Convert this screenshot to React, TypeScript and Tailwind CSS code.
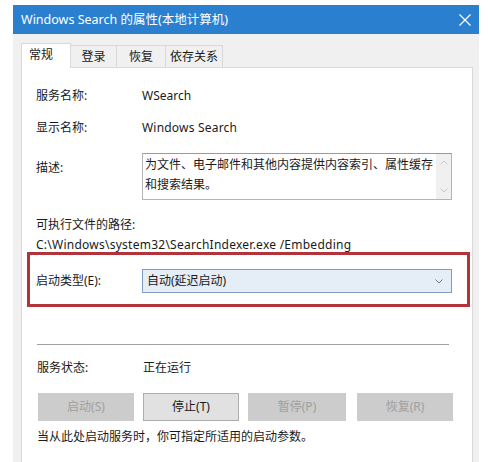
import React from 'react';

const font = { fontFamily: '"Noto Sans", "Noto Sans CJK SC", sans-serif' };

const tabs = ['常规', '登录', '恢复', '依存关系'];

const buttons = [
  { label: '启动(S)', enabled: false, w: 'w-[96px]', ml: 'ml-[1px]' },
  { label: '停止(T)', enabled: true, w: 'w-[96px]', ml: 'ml-[9px]' },
  { label: '暂停(P)', enabled: false, w: 'w-[98px]', ml: 'ml-[9px]' },
  { label: '恢复(R)', enabled: false, w: 'w-[96px]', ml: 'ml-[11px]' },
];

const Row: React.FC<{ label: string; children: React.ReactNode; className?: string }> = ({ label, children, className }) => (
  <div className={`flex h-[16px] items-center leading-[16px] ${className ?? ''}`}>
    <div className="w-[106px] shrink-0">{label}</div>
    <div>{children}</div>
  </div>
);

const App: React.FC = () => {
  return (
    <div className="w-[488px] h-[462px] bg-white overflow-hidden text-[12px] text-[#1a1a1a]" style={font}>
      <div className="ml-[13px] mt-[5px] w-[466px] h-[457px] bg-[#f0f0f0] flex flex-col">
        {/* title bar */}
        <div className="h-[29px] bg-[#2b7fcf] flex items-center justify-between pl-[8px] pr-[7px] text-white shrink-0">
          <span className="text-[12.5px] leading-[18px]">Windows Search 的属性(本地计算机)</span>
          <svg width="14" height="14" viewBox="0 0 14 14" className="mt-[1px]">
            <path d="M1.5 1.5 L12.5 12.5 M12.5 1.5 L1.5 12.5" stroke="white" strokeWidth="1.2" />
          </svg>
        </div>

        {/* tabs */}
        <div className="flex items-end h-[33px] pl-[8px] shrink-0">
          {tabs.map((t, i) =>
            i === 0 ? (
              <div key={t} className="w-[50px] h-[25px] bg-white border border-b-0 border-[#d9d9d9] pl-[7px] leading-[22px] relative z-10 -mb-[1px]">
                {t}
              </div>
            ) : (
              <div
                key={t}
                className={`h-[22px] bg-[#f0f0f0] border border-b-0 border-l-0 border-[#d9d9d9] leading-[21px] text-center ${
                  i === 1 ? 'w-[46px]' : i === 2 ? 'w-[49px]' : 'w-[57px]'
                }`}
              >
                {t}
              </div>
            )
          )}
        </div>

        {/* panel */}
        <div className="ml-[8px] w-[452px] flex-1 bg-white border border-[#d9d9d9] border-b-0">
          <div className="pl-[14px] pt-[20px]">
            <Row label="服务名称:">WSearch</Row>
            <Row label="显示名称:" className="mt-[16px]">
              <span className="tracking-[0.2px]">Windows Search</span>
            </Row>
            <div className="flex items-start mt-[17px]">
              <div className="w-[106px] shrink-0 mt-[7px] leading-[16px]">描述:</div>
              <div className="w-[310px] h-[47px] border border-[#b4b4b4] border-t-[#9a9a9a] flex">
                <div className="flex-1 pl-[2px] pt-[1px] leading-[20px]">
                  为文件、电子邮件和其他内容提供内容索引、属性缓存和搜索结果。
                </div>
                <div className="w-[15px] bg-[#f0f0f0] flex flex-col justify-between items-center py-[6px]">
                  <svg width="8" height="5" viewBox="0 0 8 5">
                    <path d="M0.5 4.5 L4 1 L7.5 4.5" stroke="#c8c8c8" fill="none" />
                  </svg>
                  <svg width="8" height="5" viewBox="0 0 8 5">
                    <path d="M0.5 0.5 L4 4 L7.5 0.5" stroke="#c8c8c8" fill="none" />
                  </svg>
                </div>
              </div>
            </div>
            <div className="mt-[17px] leading-[16px]">可执行文件的路径:</div>
            <div className="mt-[4px] leading-[16px] tracking-[0.25px]">C:\Windows\system32\SearchIndexer.exe /Embedding</div>
          </div>

          {/* startup type, highlighted */}
          <div className="ml-[5px] mt-[-1px] w-[443px] border-[3px] border-[#b3333b] pl-[6px] pr-[15px] pt-[14px] pb-[11px] flex items-center">
            <div className="w-[106px] shrink-0 leading-[16px]">启动类型(E):</div>
            <div className="flex-1 h-[24px] bg-[#e5edf6] border border-[#7e9dc4] flex items-center justify-between pl-[4px] pr-[8px]">
              <span className="leading-[16px]">自动(延迟启动)</span>
              <svg width="8" height="5" viewBox="0 0 8 5">
                <path d="M0.5 0.5 L4 4 L7.5 0.5" stroke="#777" fill="none" />
              </svg>
            </div>
          </div>

          <div className="pl-[15px]">
            <div className="mt-[37px] w-[412px] h-px bg-[#a0a0a0]" />
            <Row label="服务状态:" className="mt-[15px]">正在运行</Row>
            <div className="flex mt-[17px]">
              {buttons.map((b) => (
                <div
                  key={b.label}
                  className={`${b.w} ${b.ml} h-[28px] flex items-center justify-center border ${
                    b.enabled
                      ? 'bg-[#e1e1e1] border-[#adadad] text-[#1a1a1a]'
                      : 'bg-[#cccccc] border-[#cccccc] text-[#a0a0a0]'
                  }`}
                >
                  {b.label}
                </div>
              ))}
            </div>
            <div className="mt-[8px] leading-[16px]">当从此处启动服务时，你可指定所适用的启动参数。</div>
          </div>
        </div>
      </div>
    </div>
  );
};

export default App;
